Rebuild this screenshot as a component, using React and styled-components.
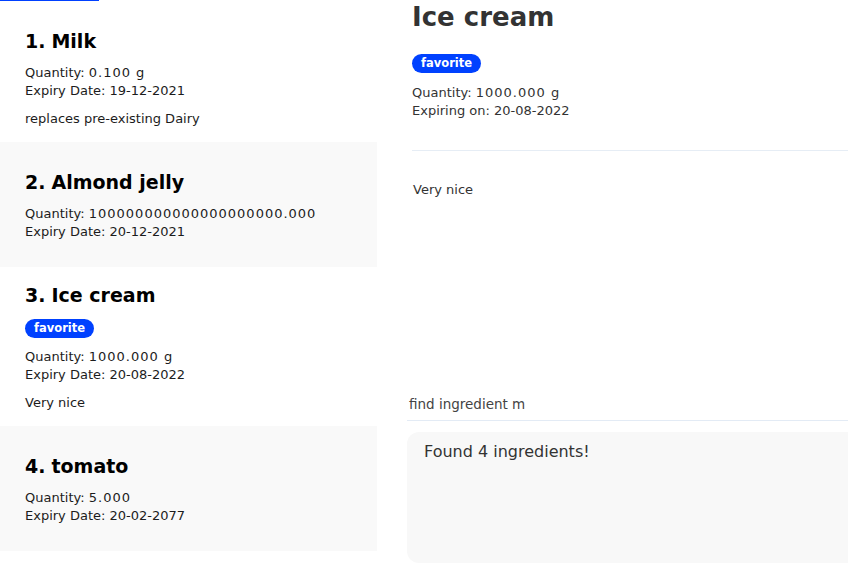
import React from 'react';
import styled, { createGlobalStyle } from 'styled-components';

const GlobalStyle = createGlobalStyle`
  html, body {
    margin: 0;
    padding: 0;
    background: #ffffff;
    overflow: hidden;
    font-family: 'DejaVu Sans', 'Noto Sans', sans-serif;
  }
`;

const Page = styled.div`
  display: flex;
  height: 563px;
  gap: 30px;
`;

const ListColumn = styled.div`
  display: flex;
  flex-direction: column;
  width: 377px;
  flex-shrink: 0;
`;

const TabMarker = styled.div`
  width: 99px;
  height: 1px;
  background: #0040ff;
`;

const Card = styled.div`
  display: flex;
  flex-direction: column;
  padding: ${({ $hasTags }) => ($hasTags ? 16 : 28)}px 20px ${({ $hasNote }) => ($hasNote ? 14 : 26)}px 25px;
  background: ${({ $shaded }) => ($shaded ? '#f9f9f9' : '#ffffff')};
`;

const CardTitle = styled.div`
  display: flex;
  gap: 6px;
  font-size: 19px;
  font-weight: bold;
  line-height: 24px;
  color: #000000;
`;

const Tags = styled.div`
  display: flex;
  gap: 6px;
  margin-top: ${({ $gap }) => $gap}px;
`;

const Badge = styled.span`
  display: inline-block;
  height: 19px;
  line-height: 19px;
  padding: 0 9px;
  border-radius: 10px;
  background: #0041ff;
  color: #ffffff;
  font-size: 11.5px;
  font-weight: bold;
`;

const Details = styled.div`
  margin-top: ${({ $gap }) => $gap}px;
  font-size: 13px;
  line-height: 18px;
  color: ${({ $tone }) => $tone || '#1c1c1c'};
`;

const Amount = styled.span`
  letter-spacing: 1px;
`;

const Note = styled.div`
  margin-top: 10px;
  font-size: 13px;
  line-height: 18px;
  color: ${({ $tone }) => $tone || '#1c1c1c'};
`;

const DetailColumn = styled.div`
  display: flex;
  flex-direction: column;
  flex: 1;
  min-width: 0;
`;

const DetailPanel = styled.div`
  flex: 1;
  padding-left: 5px;
`;

const DetailTitle = styled.div`
  font-size: 26px;
  font-weight: 600;
  line-height: 34px;
  color: #333333;
`;

const Divider = styled.div`
  height: 1px;
  margin-top: 30px;
  background: #e6edf5;
`;

const DetailNote = styled.div`
  margin-top: 30px;
  padding-left: 1px;
  font-size: 13px;
  line-height: 18px;
  color: #333333;
`;

const CommandBox = styled.div`
  padding: 0 2px 6px;
  font-size: 13.5px;
  line-height: 19px;
  color: #444444;
  border-bottom: 1px solid #e3ebf5;
`;

const ResultBox = styled.div`
  margin-top: 11px;
  height: 131px;
  padding: 10px 17px;
  box-sizing: border-box;
  border-radius: 12px 0 0 12px;
  background: #f8f8f8;
  font-size: 16px;
  line-height: 20px;
  color: #333333;
`;

const ingredients = [
  { name: 'Milk', quantity: '0.100 g', expiry: '19-12-2021', note: 'replaces pre-existing Dairy' },
  { name: 'Almond jelly', quantity: '100000000000000000000.000', expiry: '20-12-2021' },
  { name: 'Ice cream', quantity: '1000.000 g', expiry: '20-08-2022', note: 'Very nice', tags: ['favorite'] },
  { name: 'tomato', quantity: '5.000', expiry: '20-02-2077' },
];

const IngredientCard = ({ index, item }) => {
  const hasTags = Boolean(item.tags && item.tags.length);
  return (
    <Card $shaded={index % 2 === 1} $hasTags={hasTags} $hasNote={Boolean(item.note)}>
      <CardTitle>
        <span>{index + 1}.</span>
        <span>{item.name}</span>
      </CardTitle>
      {hasTags && (
        <Tags $gap={12}>
          {item.tags.map((t) => <Badge key={t}>{t}</Badge>)}
        </Tags>
      )}
      <Details $gap={hasTags ? 10 : 11}>
        <div>Quantity: <Amount>{item.quantity}</Amount></div>
        <div>Expiry Date: {item.expiry}</div>
      </Details>
      {item.note && <Note>{item.note}</Note>}
    </Card>
  );
};

const App = () => {
  const selected = ingredients[2];
  return (
    <>
      <GlobalStyle />
      <Page>
        <ListColumn>
          <TabMarker />
          {ingredients.map((item, i) => (
            <IngredientCard key={item.name} index={i} item={item} />
          ))}
        </ListColumn>
        <DetailColumn>
          <DetailPanel>
            <DetailTitle>{selected.name}</DetailTitle>
            <Tags $gap={20}>
              {selected.tags.map((t) => <Badge key={t}>{t}</Badge>)}
            </Tags>
            <Details $gap={11} $tone="#333333">
              <div>Quantity: <Amount>{selected.quantity}</Amount></div>
              <div>Expiring on: {selected.expiry}</div>
            </Details>
            <Divider />
            <DetailNote>{selected.note}</DetailNote>
          </DetailPanel>
          <CommandBox>find ingredient m</CommandBox>
          <ResultBox>Found 4 ingredients!</ResultBox>
        </DetailColumn>
      </Page>
    </>
  );
};

export default App;
